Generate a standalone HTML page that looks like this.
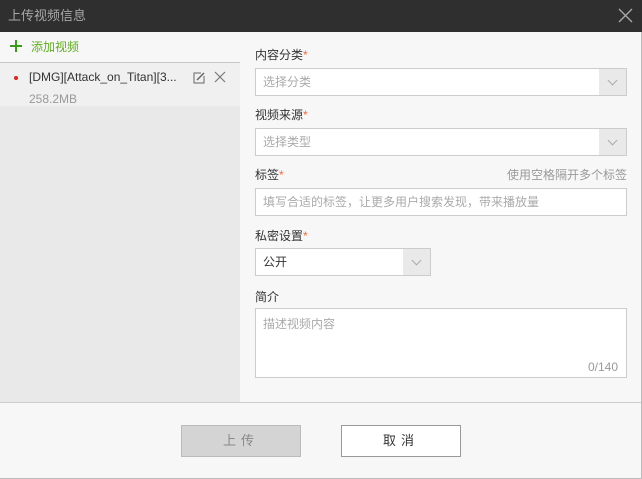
<!DOCTYPE html>
<html><head><meta charset="utf-8"><style>
*{margin:0;padding:0;box-sizing:border-box}
body{width:642px;height:479px;background:#f7f7f7;font-family:"Liberation Sans","Noto Sans CJK SC",sans-serif;font-size:12px;color:#333;position:relative;overflow:hidden}
.a{position:absolute}
.hdr{left:0;top:0;width:642px;height:32px;background:#2f2f2f;color:#a8a8a8;font-size:13px;line-height:32px;padding-left:8px}
.lbl{left:255px;font-size:12px;color:#333}
.lbl i{font-style:normal;color:#f06a3c}
.box{background:#fff;border:1px solid #ccc;height:28px;line-height:26px;padding-left:7px;color:#aaa}
.arr{position:absolute;right:0;top:0;width:27px;height:26px;background:#e9e9e9}
.arr:after{content:"";position:absolute;left:10px;top:8px;width:6px;height:6px;border-right:1px solid #aaa;border-bottom:1px solid #aaa;transform:rotate(45deg)}
</style></head><body>
<div class="a hdr">上传视频信息</div>
<svg class="a" style="left:618px;top:8px" width="15" height="15"><path d="M1 1L14 14M14 1L1 14" stroke="#aaa" stroke-width="1.3"/></svg>
<div class="a" style="left:0;top:32px;width:240px;height:30px;background:#f7f7f7"></div>
<svg class="a" style="left:9px;top:39px" width="14" height="14"><path d="M7 1V13M1 7H13" stroke="#3a9b1a" stroke-width="2"/></svg>
<div class="a" style="left:31px;top:38px;color:#5fae1c;font-size:12px">添加视频</div>
<div class="a" style="left:0;top:62px;width:240px;height:340px;background:#e9e9e9;border-top:1px solid #c8c8c8"></div>
<div class="a" style="left:0;top:63px;width:240px;height:43px;background:#f0f0f0"></div>
<div class="a" style="left:14px;top:76px;width:4px;height:4px;border-radius:2px;background:#e2231a"></div>
<div class="a" style="left:29px;top:70px;font-size:12px;color:#333">[DMG][Attack_on_Titan][3...</div>
<svg class="a" style="left:193px;top:72px" width="12" height="12"><path d="M8 1H1V11H11V4" fill="none" stroke="#666"/><path d="M4 8L11 1" stroke="#666" stroke-width="1.5"/></svg>
<svg class="a" style="left:214px;top:71px" width="12" height="12"><path d="M1 1L11 11M11 1L1 11" stroke="#777" stroke-width="1.2"/></svg>
<div class="a" style="left:29px;top:92px;color:#999">258.2MB</div>

<div class="a lbl" style="top:46px">内容分类<i>*</i></div>
<div class="a box" style="left:255px;top:68px;width:372px">选择分类<div class="arr"></div></div>
<div class="a lbl" style="top:106px">视频来源<i>*</i></div>
<div class="a box" style="left:255px;top:128px;width:372px">选择类型<div class="arr"></div></div>
<div class="a lbl" style="top:166px">标签<i>*</i></div>
<div class="a" style="right:15px;top:166px;color:#999">使用空格隔开多个标签</div>
<div class="a box" style="left:255px;top:188px;width:372px">填写合适的标签，让更多用户搜索发现，带来播放量</div>
<div class="a lbl" style="top:227px">私密设置<i>*</i></div>
<div class="a box" style="left:255px;top:248px;width:176px;color:#333">公开<div class="arr"></div></div>
<div class="a lbl" style="top:288px">简介</div>
<div class="a box" style="left:255px;top:308px;width:372px;height:70px;line-height:30px">描述视频内容</div>
<div class="a" style="left:588px;top:360px;color:#999">0/140</div>

<div class="a" style="left:0;top:402px;width:642px;height:1px;background:#ccc"></div>
<div class="a" style="left:181px;top:425px;width:120px;height:32px;background:#d4d4d4;border:1px solid #bbb;text-align:center;line-height:30px;color:#888;font-size:13px;letter-spacing:5px">上传</div>
<div class="a" style="left:341px;top:425px;width:120px;height:32px;background:#fff;border:1px solid #999;text-align:center;line-height:30px;color:#333;font-size:13px;letter-spacing:5px">取消</div>
<div class="a" style="left:641px;top:32px;width:1px;height:447px;background:#bbb"></div>
<div class="a" style="left:0;top:478px;width:642px;height:1px;background:#bbb"></div>
</body></html>
